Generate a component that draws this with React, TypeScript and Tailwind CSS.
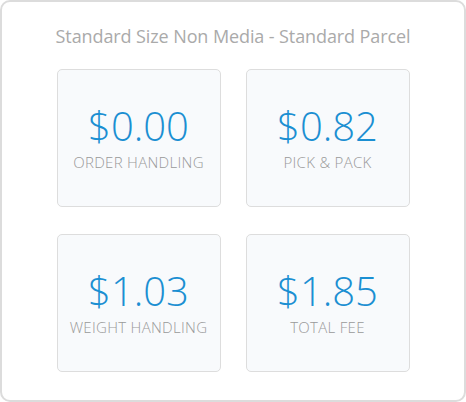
import React from "react";

const items = [
  { price: "$0.00", label: "ORDER HANDLING" },
  { price: "$0.82", label: "PICK & PACK" },
  { price: "$1.03", label: "WEIGHT HANDLING" },
  { price: "$1.85", label: "TOTAL FEE" },
];

export default function App() {
  return (
    <div className="w-[466px] h-[402px] bg-white" style={{ fontFamily: '"Open Sans", sans-serif' }}>
      <div className="w-[466px] h-[402px] border-2 border-[#dcdcdc] rounded-[10px] bg-white flex flex-col items-center">
        <div className="mt-[21px] h-[26px] leading-[26px] text-[18px] text-[#aaaaaa] tracking-[-0.1px]">
          Standard Size Non Media - Standard Parcel
        </div>
        <div className="mt-[20px] grid grid-cols-[164px_164px] gap-x-[25px] gap-y-[27px]">
          {items.map((it) => (
            <div
              key={it.label}
              className="h-[138px] border border-[#dddddd] rounded-[5px] bg-[#f8fafc] flex flex-col items-center justify-center"
            >
              <div className="text-[40px] leading-[42px] font-light text-[#1b8fd2]">{it.price}</div>
              <div className="mt-[6px] text-[15px] leading-[18px] font-light tracking-[0.3px] text-[#999999]">{it.label}</div>
            </div>
          ))}
        </div>
      </div>
    </div>
  );
}
